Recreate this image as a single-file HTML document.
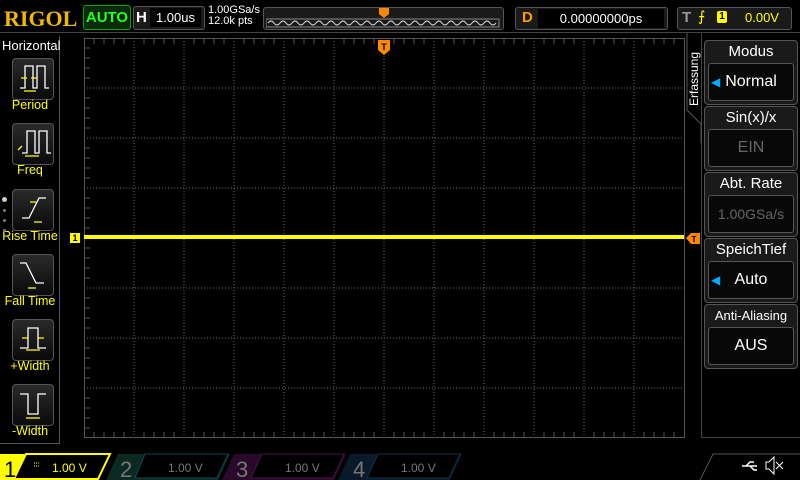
<!DOCTYPE html><html><head><style>
body{margin:0;width:800px;height:480px;background:#000;overflow:hidden;font-family:"Liberation Sans",sans-serif;position:relative}
.a{position:absolute}
.btn{position:absolute;left:12px;width:40px;height:40px;border:1px solid #555;border-radius:4px;background:linear-gradient(#2a2a2a,#0a0a0a)}
.lbl{position:absolute;left:0;width:60px;text-align:center;color:#ff0;font-size:12.5px}
.mb{position:absolute;left:704px;width:92px;border:1px solid #555;border-radius:4px;background:#1a1a1a}
.mt{color:#fff;font-size:15px;text-align:center;height:22px;line-height:22px}
.mv{margin:0 3px 3px;height:36px;border:1px solid #555;border-radius:3px;background:#080808;color:#fff;font-size:16px;line-height:36px;text-align:center}
</style></head><body>
<div class="a" style="left:4px;top:6px;color:#f0b800;font:bold 22px 'Liberation Serif',serif">RIGOL</div>
<div class="a" style="left:83px;top:5px;width:46px;height:23px;border:1px solid #0a0;border-radius:3px;color:#2f2;font:bold 15px 'Liberation Sans';line-height:23px;text-align:center;background:#0a2a0a">AUTO</div>
<div class="a" style="left:133px;top:6px;width:70px;height:22px;border:1px solid #555;border-radius:3px;background:#1a1a1a"></div>
<div class="a" style="left:136px;top:9px;color:#fff;font:bold 15px 'Liberation Sans'">H</div>
<div class="a" style="left:150px;top:8px;width:51px;height:19px;background:#000;color:#fff;font-size:13px;line-height:19px;text-align:center">1.00us</div>
<div class="a" style="left:208px;top:5px;color:#fff;font-size:11px;line-height:11px">1.00GSa/s<br>12.0k pts</div>
<div class="a" style="left:263px;top:7px;width:239px;height:21px;border:1px solid #555;border-radius:3px;background:#1a1a1a"></div>
<svg class="a" style="left:266px;top:8px" width="234" height="20"><rect x="0" y="11" width="233" height="8" fill="none" stroke="#888"/><path d="M2 15 q3 -4 6 0 t6 0 t6 0 t6 0 t6 0 t6 0 t6 0 t6 0 t6 0 t6 0 t6 0 t6 0 t6 0 t6 0 t6 0 t6 0 t6 0 t6 0 t6 0 t6 0 t6 0 t6 0 t6 0 t6 0 t6 0 t6 0 t6 0 t6 0 t6 0 t6 0 t6 0 t6 0 t6 0 t6 0 t6 0 t6 0 t6 0 t6 0" stroke="#ddd" fill="none"/><path d="M113 0h10v6l-5 4l-5-4z" fill="#f80"/></svg>
<div class="a" style="left:515px;top:7px;width:151px;height:21px;border:1px solid #555;border-radius:3px;background:#1a1a1a"></div>
<div class="a" style="left:522px;top:9px;color:#f90;font:bold 15px 'Liberation Sans'">D</div>
<div class="a" style="left:538px;top:9px;width:126px;height:19px;background:#000;color:#fff;font-size:13px;line-height:19px;text-align:center">0.00000000ps</div>
<div class="a" style="left:677px;top:7px;width:113px;height:21px;border:1px solid #555;border-radius:3px;background:#1a1a1a"></div>
<div class="a" style="left:682px;top:9px;color:#999;font:bold 15px 'Liberation Sans'">T</div>
<div class="a" style="left:698px;top:8px;color:#ff0;font-size:14px">⨍</div>
<div class="a" style="left:717px;top:11px;width:10px;height:12px;background:#ff0;border-radius:2px;color:#000;font:bold 10px 'Liberation Sans';text-align:center;line-height:12px">1</div>
<div class="a" style="left:745px;top:10px;color:#ff0;font-size:13px">0.00V</div>
<div class="a" style="left:0;top:32px;width:800px;height:1px;background:#444"></div>
<div class="a" style="left:59px;top:36px;width:1px;height:408px;background:#555"></div>
<div class="a" style="left:0;top:443px;width:60px;height:1px;background:#555"></div>
<div class="a" style="left:2px;top:38px;color:#fff;font-size:13px">Horizontal</div>
<div class="btn" style="top:58px"></div><div class="lbl" style="top:98px">Period</div>
<div class="btn" style="top:123px"></div><div class="lbl" style="top:163px">Freq</div>
<div class="btn" style="top:189px"></div><div class="lbl" style="top:229px">Rise Time</div>
<div class="btn" style="top:254px"></div><div class="lbl" style="top:294px">Fall Time</div>
<div class="btn" style="top:319px"></div><div class="lbl" style="top:359px">+Width</div>
<div class="btn" style="top:384px"></div><div class="lbl" style="top:424px">-Width</div>
<svg class="a" style="left:12px;top:58px" width="42" height="380" fill="none" stroke="#fff" stroke-width="1.3">
<path d="M8 30h5V8h8v22h4V8h8v22h4"/><path d="M9 20h6M19 20h6M12 33h12" stroke="#ff0"/>
<path d="M10 95h5V73h8v22h4V73h8v22h4"/><path d="M13 98h14M6 92l4-4" stroke="#ff0"/>
<path d="M10 160h7l10-20h7"/><path d="M22 164h8M18 144h6" stroke="#ff0"/>
<path d="M8 205h6l10 20h8"/><path d="M16 230h8" stroke="#ff0"/>
<path d="M8 290h8V270h10v20h8"/><path d="M10 280h6M26 280h6M14 292h14" stroke="#ff0"/>
<path d="M8 336h8v20h10v-20h8"/><path d="M14 360h14" stroke="#ff0"/>
</svg>
<div class="a" style="left:2px;top:197px;width:5px;height:5px;border-radius:50%;background:#ccc"></div>
<div class="a" style="left:3px;top:209px;width:3px;height:3px;border-radius:50%;background:#777"></div>
<div class="a" style="left:3px;top:219px;width:3px;height:3px;border-radius:50%;background:#777"></div>
<div class="a" style="left:3px;top:229px;width:3px;height:3px;border-radius:50%;background:#777"></div>
<svg class="a" style="left:84px;top:38px" width="602" height="401">
<g stroke="#666" stroke-dasharray="1 2">
<path d="M50 0v400M100 0v400M150 0v400M200 0v400M250 0v400M350 0v400M400 0v400M450 0v400M500 0v400M550 0v400"/>
<path d="M0 50h600M0 100h600M0 150h600M0 250h600M0 300h600M0 350h600"/>
<path d="M300 0v400M0 200h600"/>
</g>
<rect x="0.5" y="0.5" width="600" height="399" fill="none" stroke="#555"/>
<path id="t" d="M10 1v5M20 1v5M30 1v5M40 1v5M60 1v5M70 1v5M80 1v5M90 1v5M110 1v5M120 1v5M130 1v5M140 1v5M160 1v5M170 1v5M180 1v5M190 1v5M210 1v5M220 1v5M230 1v5M240 1v5M260 1v5M270 1v5M280 1v5M290 1v5M310 1v5M320 1v5M330 1v5M340 1v5M360 1v5M370 1v5M380 1v5M390 1v5M410 1v5M420 1v5M430 1v5M440 1v5M460 1v5M470 1v5M480 1v5M490 1v5M510 1v5M520 1v5M530 1v5M540 1v5M560 1v5M570 1v5M580 1v5M590 1v5" stroke="#555"/>
<use href="#t" transform="translate(0,393)"/>
<path d="M1 10h5M1 20h5M1 30h5M1 40h5M1 60h5M1 70h5M1 80h5M1 90h5M1 110h5M1 120h5M1 130h5M1 140h5M1 160h5M1 170h5M1 180h5M1 190h5M1 210h5M1 220h5M1 230h5M1 240h5M1 260h5M1 270h5M1 280h5M1 290h5M1 310h5M1 320h5M1 330h5M1 340h5M1 360h5M1 370h5M1 380h5M1 390h5" stroke="#555"/>
<rect x="0" y="197" width="600" height="4" fill="#ff0"/>
</svg>
<svg class="a" style="left:378px;top:40px" width="12" height="16"><path d="M0 0h12v10l-6 5l-6-5z" fill="#f80"/><text x="6" y="10" font-size="9" font-weight="bold" text-anchor="middle" fill="#000">T</text></svg>
<div class="a" style="left:70px;top:233px;width:10px;height:10px;background:#ff0;color:#000;font:bold 9px 'Liberation Sans';text-align:center;line-height:10px">1</div>
<svg class="a" style="left:686px;top:233px" width="14" height="11"><path d="M0 5l5-5h9v11h-9z" fill="#f80"/><text x="8" y="9" font-size="8" font-weight="bold" text-anchor="middle" fill="#000">T</text></svg>
<div class="a" style="left:701px;top:33px;width:1px;height:405px;background:#444"></div>
<div class="a" style="left:701px;top:437px;width:99px;height:1px;background:#444"></div>
<svg class="a" style="left:686px;top:33px" width="16" height="110"><path d="M1 0v77l14 14v19" stroke="#555" fill="none"/><text transform="translate(12,73) rotate(-90)" font-family="Liberation Sans" font-size="12" fill="#fff">Erfassung</text></svg>
<div class="mb" style="top:40px"><div class="mt">Modus</div><div class="mv"><span style="color:#0af;font-size:12px;position:absolute;left:6px">◀</span>Normal</div></div>
<div class="mb" style="top:106px"><div class="mt">Sin(x)/x</div><div class="mv" style="color:#666">EIN</div></div>
<div class="mb" style="top:172px"><div class="mt">Abt. Rate</div><div class="mv" style="color:#666;font-size:14px">1.00GSa/s</div></div>
<div class="mb" style="top:238px"><div class="mt">SpeichTief</div><div class="mv"><span style="color:#0af;font-size:12px;position:absolute;left:6px">◀</span>Auto</div></div>
<div class="mb" style="top:304px"><div class="mt" style="font-size:13px">Anti-Aliasing</div><div class="mv">AUS</div></div>
<svg class="a" style="left:0;top:453px" width="800" height="27">
<rect x="0" y="1" width="26" height="26" fill="#ff0"/>
<path d="M26 1h84l-12 25H14z" fill="#000" stroke="#ff0" stroke-width="2"/>
<path d="M118 1h112l-12 26H106z" fill="#0a2a22"/><path d="M145 1h83l-11 24h-82z" fill="#000" stroke="#145"/>
<path d="M234 1h112l-12 26H222z" fill="#2a0a2a"/><path d="M262 1h82l-11 24h-82z" fill="#000" stroke="#414"/>
<path d="M350 1h112l-12 26H338z" fill="#0a1a2a"/><path d="M378 1h82l-11 24h-82z" fill="#000" stroke="#134"/>
<path d="M700 27l13-26h87" stroke="#555" fill="none"/>
<g font-family="Liberation Sans" font-size="12">
<text x="4" y="24" font-size="22" fill="#000">1</text><text x="52" y="19" fill="#ff0">1.00 V</text><path d="M34 10h6M34 13h6" stroke="#ff0" stroke-dasharray="1 1"/>
<text x="120" y="24" font-size="22" fill="#777">2</text><text x="168" y="19" fill="#777">1.00 V</text>
<text x="236" y="24" font-size="22" fill="#777">3</text><text x="285" y="19" fill="#777">1.00 V</text>
<text x="353" y="24" font-size="22" fill="#777">4</text><text x="401" y="19" fill="#777">1.00 V</text>
</g>
<path d="M742 13h15M746 13l4-4h4M750 13l4 4h3" stroke="#fff" stroke-width="1.5" fill="none"/>
<path d="M766 9h3l5-5v17l-5-5h-3z" stroke="#fff" fill="none"/><path d="M776 9l7 7M783 9l-7 7" stroke="#fff"/>
</svg>
</body></html>
